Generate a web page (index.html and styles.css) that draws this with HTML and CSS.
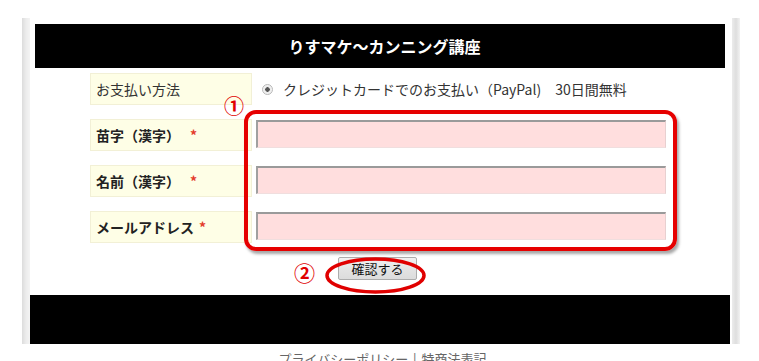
FILE: index.html
```html
<!DOCTYPE html>
<html lang="ja">
<head>
<meta charset="utf-8">
<link rel="stylesheet" href="styles.css">
</head>
<body>
<div class="page">
  <div class="header">りすマケ～カンニング講座</div>
  <div class="form">
    <div class="row">
      <div class="label">お支払い方法</div>
      <div class="value pay">
        <span class="radio"></span>
        <span class="pay-text">クレジットカードでのお支払い（PayPal)　30日間無料</span>
      </div>
    </div>
    <div class="row">
      <div class="label bold">苗字（漢字）<span class="req">*</span></div>
      <div class="value"><div class="input"></div></div>
    </div>
    <div class="row">
      <div class="label bold">名前（漢字）<span class="req">*</span></div>
      <div class="value"><div class="input"></div></div>
    </div>
    <div class="row">
      <div class="label bold">メールアドレス<span class="req req-tight">*</span></div>
      <div class="value"><div class="input"></div></div>
    </div>
    <div class="submit-row">
      <button class="btn">確認する</button>
    </div>
  </div>
  <div class="footer"></div>

  <div class="mark-box"></div>
  <div class="num num1">①</div>
  <div class="num num2">②</div>
  <svg class="mark-ellipse" width="103" height="39" viewBox="0 0 103 39">
    <ellipse cx="51.5" cy="19.5" rx="48.5" ry="16.5" fill="none" stroke="#e00000" stroke-width="3.5"/>
  </svg>
</div>
<div class="links">プライバシーポリシー <span class="sep">|</span> 特商法表記</div>
</body>
</html>
```
FILE: styles.css
```css
html, body {
  margin: 0;
  padding: 0;
  background: #fff;
}
body {
  font-family: "Noto Sans CJK JP", "Noto Sans", sans-serif;
  color: #333;
  width: 759px;
  height: 361px;
  overflow: hidden;
}
.page {
  position: relative;
  margin: 18px 0 0 22px;
  width: 718px;
  padding: 6px 8px 0;
  box-sizing: border-box;
  background:
    linear-gradient(to right, #dcdcdc, #ececec 4px, #f4f4f4 8px, #fff 8px, #fff 710px, #ececec 710px, #dedede 714px, #f2f2f2 718px);
}
.header {
  margin: 0 7px 0 5px;
  height: 44px;
  background: #000;
  color: #fff;
  font-weight: bold;
  font-size: 16px;
  line-height: 44px;
  text-align: center;
  padding-left: 9px;
  box-sizing: border-box;
}
.form {
  padding: 5px 0 0 60px;
}
.row {
  display: flex;
  height: 32px;
  margin-bottom: 14px;
}
.label {
  width: 162px;
  box-sizing: border-box;
  background: #fefee6;
  border: 1px solid #f2f0d6;
  padding-left: 5px;
  display: flex;
  align-items: center;
  font-size: 14px;
  color: #333;
  line-height: 1;
}
.label.bold {
  font-weight: bold;
  color: #222;
}
.req {
  color: #e43b2c;
  margin-left: 10px;
  font-size: 14px;
}
.req-tight {
  margin-left: 5px;
}
.value {
  display: flex;
  align-items: flex-start;
}
.pay {
  align-items: center;
  font-size: 14px;
  color: #333;
  line-height: 1;
}
.radio {
  width: 9px;
  height: 9px;
  border-radius: 50%;
  border: 1px solid #b8b8b8;
  background: radial-gradient(circle, #555 0, #555 2px, #e9e9e9 2.5px, #f6f6f6 5px);
  margin: 0 10px 0 10px;
}
.input {
  margin: 1px 0 0 4px;
  width: 410px;
  height: 28px;
  box-sizing: border-box;
  background: #ffdede;
  border-top: 2px solid #9a9a9a;
  border-left: 2px solid #a0a0a0;
  border-right: 1px solid #e8d0d0;
  border-bottom: 1px solid #f0dede;
}
.submit-row {
  height: 38px;
  padding-left: 248px;
  box-sizing: border-box;
}
.btn {
  display: block;
  margin-top: 1px;
  width: 79px;
  height: 23px;
  padding: 0;
  border: 1px solid #acacac;
  border-radius: 2px;
  background: linear-gradient(#f2f2f2, #e4e4e4 50%, #dcdcdc);
  font-family: "Noto Sans CJK JP", sans-serif;
  font-size: 13px;
  color: #111;
  line-height: 21px;
}
.footer {
  height: 49px;
  margin-right: 2px;
  background: #000;
}
.links {
  margin-top: 7px;
  padding-left: 6px;
  text-align: center;
  font-size: 13px;
  color: #666;
  line-height: 16px;
}
.sep {
  margin: 0 2px;
}
.mark-box {
  position: absolute;
  left: 222px;
  top: 92px;
  width: 433px;
  height: 141px;
  box-sizing: border-box;
  border: 4px solid #e60000;
  border-radius: 12px;
  box-shadow: 2px 3px 3px rgba(0, 0, 0, 0.35);
}
.num {
  position: absolute;
  color: #e00000;
  line-height: 1;
  font-weight: bold;
}
.num1 {
  left: 202px;
  top: 78px;
  font-size: 20px;
}
.num2 {
  left: 272px;
  top: 244px;
  font-size: 21px;
}
.mark-ellipse {
  position: absolute;
  left: 302px;
  top: 238px;
}
```
